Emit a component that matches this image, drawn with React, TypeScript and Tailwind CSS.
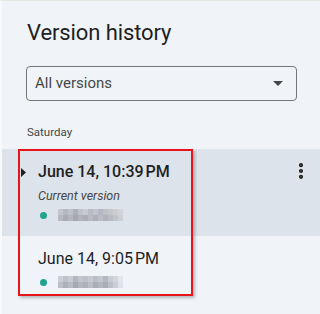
import { MoreVertical } from "lucide-react";

const MOSAIC_A = [
  ["#c3c5cc", "#b4b7bf", "#bec1c8", "#aeb1ba", "#c1c3ca", "#c9cbd1", "#b8bbc3", "#c2c4cb", "#b5b8c0", "#bdc0c7", "#c4c6cc", "#cbcdd2", "#d2d4d9"],
  ["#b6b9c1", "#a9acb5", "#b3b6be", "#a4a8b1", "#b1b4bc", "#aaaeb7", "#b7bac2", "#adb0b9", "#b9bcc3", "#b0b3bb", "#b8bbc2", "#c2c4cb", "#cccfd4"],
];
const MOSAIC_B = [
  ["#cbced4", "#bfc2c9", "#c9ccd2", "#b4b7bf", "#c2c5cb", "#bdc0c7", "#c6c9cf", "#babec6", "#c3c6cc", "#b3b9c4", "#c9ccd1", "#d3d6db", "#e2e5ea"],
  ["#bcbfc6", "#adb0b9", "#b8bbc2", "#a5a9b2", "#b4b7be", "#aeb1b9", "#bbbec5", "#a9adb6", "#b3b6bd", "#a6adb9", "#bcbfc6", "#cacdd2", "#dfe2e7"],
];

function Mosaic({ cells }: { cells: string[][] }) {
  return (
    <div className="flex flex-col">
      {cells.map((row, i) => (
        <div key={i} className="flex">
          {row.map((c, j) => (
            <div key={j} className="w-[5px] h-[6px]" style={{ background: c }} />
          ))}
        </div>
      ))}
    </div>
  );
}

function Author({ cells }: { cells: string[][] }) {
  return (
    <div className="flex items-center gap-[11px] pl-[2px]">
      <span className="w-[7px] h-[7px] rounded-full bg-[#22a390]" />
      <Mosaic cells={cells} />
    </div>
  );
}

export default function App() {
  return (
    <div
      className="relative w-[320px] h-[314px] overflow-hidden bg-[#f0f4f9] border-t border-[#e6e8e2] border-l-2 border-l-[#f8f9fb] text-[#1f1f1f]"
      style={{ fontFamily: "Roboto, 'Noto Sans', sans-serif" }}
    >
      <div className="px-[25px] pt-[17px]">
        <h1 className="text-[22px] leading-[30px] font-normal tracking-[-0.1px]">Version history</h1>
        <div className="mt-[18px] h-[35px] w-[271px] -ml-[1px] flex items-center justify-between rounded-[4px] border border-[#747775] pl-[8px] pr-[13px]">
          <span className="text-[15px] text-[#444746]">All versions</span>
          <svg width="10" height="5" viewBox="0 0 10 5">
            <path d="M0 0 L10 0 L5 5 Z" fill="#444746" />
          </svg>
        </div>
        <div className="mt-[23px] text-[11.5px] text-[#444746]">Saturday</div>
      </div>

      <div className="mt-[8px]">
        <div className="relative h-[87px] bg-[#dde3ea] pl-[36px] pt-[12px]">
          <svg className="absolute left-[19px] top-[19px]" width="5" height="9" viewBox="0 0 5 9">
            <path d="M0 0 L5 4.5 L0 9 Z" fill="#1f1f1f" />
          </svg>
          <MoreVertical className="absolute right-[9px] top-[12px] text-[#1f1f1f]" size={20} strokeWidth={3} />
          <div className="text-[16px] leading-[22px] font-medium">June 14, 10:39&#8239;PM</div>
          <div className="mt-[4px] text-[12.5px] leading-[18px] italic text-[#444746]">Current version</div>
          <div className="mt-[4px]">
            <Author cells={MOSAIC_A} />
          </div>
        </div>
        <div className="pl-[36px] pt-[12px]">
          <div className="text-[16px] leading-[22px]">June 14, 9:05&#8239;PM</div>
          <div className="mt-[6px]">
            <Author cells={MOSAIC_B} />
          </div>
        </div>
      </div>

      <div className="absolute left-[16px] top-[148px] w-[175px] h-[147px] border-2 border-[#e8141c] shadow-[2px_2px_3px_rgba(0,0,0,0.25)]" />
    </div>
  );
}
